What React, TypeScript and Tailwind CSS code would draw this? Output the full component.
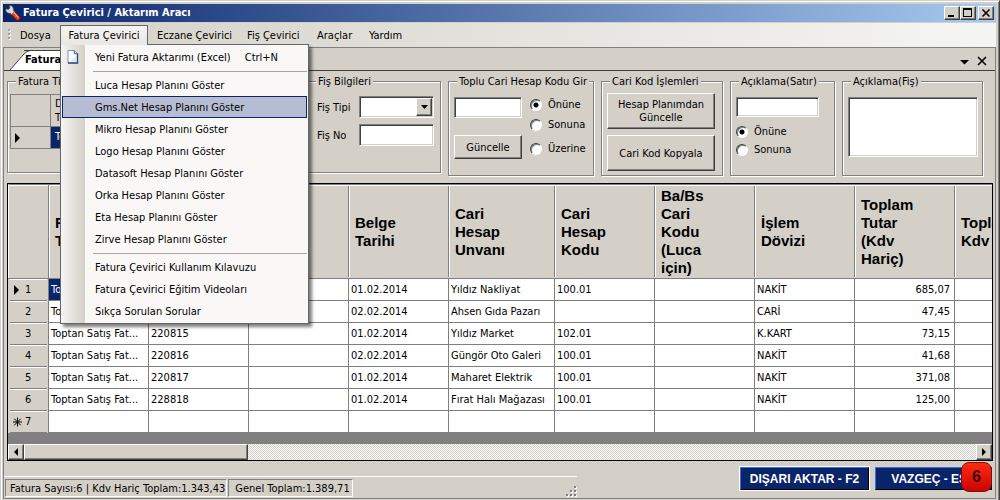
import type { ReactNode } from "react";

const raised =
  "border border-t-white border-l-white border-r-[#404040] border-b-[#404040] bg-[#d4d0c8] shadow-[inset_-1px_-1px_0_#808080]";
const sunken =
  "border border-t-[#808080] border-l-[#808080] border-r-white border-b-white bg-white shadow-[inset_1px_1px_0_#404040,inset_-1px_-1px_0_#d4d0c8] outline-none";

function GroupBox({ title, className, body, children }: { title: string; className: string; body: string; children: ReactNode }) {
  return (
    <fieldset
      className={`min-w-0 border border-[#808080] shadow-[1px_1px_0_#fff,inset_1px_1px_0_#fff] ${className}`}
    >
      <legend className="ml-2 h-3.5 bg-[#d4d0c8] px-0.5 leading-4 whitespace-nowrap">{title}</legend>
      <div className={body}>{children}</div>
    </fieldset>
  );
}

function Radio({ name, label, checked }: { name: string; label: string; checked?: boolean }) {
  return (
    <label className="flex h-4 items-center gap-1.5 leading-4">
      <input
        type="radio"
        name={name}
        defaultChecked={checked}
        className="size-3 shrink-0 appearance-none rounded-full border border-t-[#404040] border-l-[#404040] border-r-white border-b-white bg-white shadow-[inset_1px_1px_0_#808080] checked:bg-[radial-gradient(circle,#000_2px,#fff_3px)]"
      />
      {label}
    </label>
  );
}

function PushButton({ children, className }: { children: ReactNode; className: string }) {
  return (
    <button type="button" className={`${raised} text-center leading-[13px] ${className}`}>
      {children}
    </button>
  );
}

function WrenchIcon() {
  return (
    <svg viewBox="0 0 16 16" className="size-4" aria-hidden="true">
      <path d="M8 8 L12.8 13.2" stroke="#7c1408" strokeWidth="5.2" strokeLinecap="round" />
      <path d="M8 8 L12.7 13" stroke="#e8442c" strokeWidth="3.6" strokeLinecap="round" />
      <path d="M9 7.6 L13.2 12.2" stroke="#ffb09c" strokeWidth="1.1" strokeLinecap="round" />
      <path
        d="M4.4 0.8 L5 3 L3.4 4.6 L1 4 C0.4 6.6 2.6 8.6 5 8.1 L6.6 9.4 L9.4 6.8 L8.2 5.2 C8.8 2.4 6.8 0.2 4.4 0.8 Z"
        fill="#dcdcdc"
        stroke="#6c6c6c"
        strokeWidth="0.7"
      />
    </svg>
  );
}

function PageIcon() {
  return (
    <svg viewBox="0 0 12 14" className="h-3.5 w-3" aria-hidden="true">
      <path d="M1 0.5 H7.5 L10.5 3.5 V13 H1 Z" fill="#fff" stroke="#7d93b5" />
      <path d="M3 12 L9.5 5 V12 Z" fill="#dce8f6" />
      <path d="M10.5 3.5 V13 H1" fill="none" stroke="#2f4d7c" strokeWidth="1.4" />
      <path d="M7.3 0.7 V3.7 H10.3" fill="#cfdcf0" stroke="#2f4d7c" strokeWidth="0.9" />
    </svg>
  );
}

function TitleBar() {
  const box = `${raised} flex h-3.5 w-4 items-center justify-center`;
  return (
    <header className="flex h-[19px] items-center border-b border-[#d4d0c8] bg-[linear-gradient(90deg,#0a246a,#a6caf0)] pr-0.5 pl-0.5">
      <WrenchIcon />
      <h1 className="ml-0.5 flex-1 text-[11px] font-bold text-white">Fatura Çevirici / Aktarım Aracı</h1>
      <button type="button" aria-label="Simge durumuna küçült" className={box}>
        <svg viewBox="0 0 12 10" className="h-2.5 w-3"><path d="M2 7h6v2H2z" /></svg>
      </button>
      <button type="button" aria-label="Ekranı kapla" className={box}>
        <svg viewBox="0 0 12 10" className="h-2.5 w-3"><path d="M1 0h9v9H1zM2 2v6h7V2z" fillRule="evenodd" /></svg>
      </button>
      <button type="button" aria-label="Kapat" className={`${box} ml-0.5`}>
        <svg viewBox="0 0 12 10" className="h-2.5 w-3"><path d="M2.5 1.5l7 7M9.5 1.5l-7 7" stroke="#000" strokeWidth="1.6" /></svg>
      </button>
    </header>
  );
}

function MenuEntry({ children, shortcut, icon, active }: { children: ReactNode; shortcut?: string; icon?: ReactNode; active?: boolean }) {
  return (
    <li
      role="none"
      className={`flex h-[22px] items-center border ${active ? "border-[#0a246a] bg-[#b6bdd2]" : "border-transparent"}`}
    >
      <span className="flex w-8 shrink-0 pl-1">{icon}</span>
      <button type="button" role="menuitem" className="flex gap-3.5 pt-0.5 leading-4 whitespace-nowrap">
        <span>{children}</span>
        {shortcut && <span>{shortcut}</span>}
      </button>
    </li>
  );
}

function Separator() {
  return (
    <li role="separator" className="flex h-1.5 items-center pl-[31px]">
      <span className="h-px flex-1 bg-[#a6a6a6]" />
    </li>
  );
}

const plans = ["Luca", "Gms.Net", "Mikro", "Logo", "Datasoft", "Orka", "Eta", "Zirve"];

function MenuBar() {
  const item = "h-5 pl-[9px] text-left leading-[22px] whitespace-nowrap";
  return (
    <nav className="flex h-6 bg-[linear-gradient(90deg,#d4d0c8,#f5f5f3)] pt-0.5">
      <svg viewBox="0 0 3 12" className="mt-1 ml-[5px] h-3 w-[3px]" aria-hidden="true">
        <path d="M0 0h2v2H0zM0 4h2v2H0zM0 8h2v2H0z" fill="#a9a59c" />
        <path d="M2 1h1v2H1V2h1zM2 5h1v2H1V6h1zM2 9h1v2H1v-1h1z" fill="#fff" />
      </svg>
      <button type="button" className={`${item} w-[49px]`}>Dosya</button>
      <div className="relative z-30">
        <button
          type="button"
          aria-expanded="true"
          className="relative z-20 block h-5 w-[88px] border border-b-0 border-[#666] bg-[linear-gradient(#f5f4f2,#e9e7e3)] text-center leading-5"
        >
          Fatura Çevirici
        </button>
        <ul
          role="menu"
          className="absolute top-[19px] left-0 z-10 w-[249px] border border-[#666] bg-[linear-gradient(90deg,#f6f5f3,#d4d0c8_24px,#f9f8f7_24px)] p-px shadow-[3px_3px_3px_#00000080]"
        >
          <MenuEntry icon={<PageIcon />} shortcut="Ctrl+N">Yeni Fatura Aktarımı (Excel)</MenuEntry>
          <Separator />
          {plans.map((p) => (
            <MenuEntry key={p} active={p === "Gms.Net"}>{p} Hesap Planını Göster</MenuEntry>
          ))}
          <Separator />
          <MenuEntry>Fatura Çevirici Kullanım Kılavuzu</MenuEntry>
          <MenuEntry>Fatura Çevirici Eğitim Videoları</MenuEntry>
          <MenuEntry>Sıkça Sorulan Sorular</MenuEntry>
        </ul>
      </div>
      <button type="button" className={`${item} w-[90px]`}>Eczane Çevirici</button>
      <button type="button" className={`${item} w-[70px]`}>Fiş Çevirici</button>
      <button type="button" className={`${item} w-[52px]`}>Araçlar</button>
      <button type="button" className={`${item} w-[52px]`}>Yardım</button>
    </nav>
  );
}

function TabStrip() {
  return (
    <div className="flex h-[23px] items-end border-b border-[#404040] pl-1.5">
      <svg viewBox="0 0 20 20" className="h-5 w-5" aria-hidden="true">
        <path d="M0 20 L14 4 Q17 1 20 0.5 V20 Z" fill="#fff" />
        <path d="M0 20 L14 4 Q17 1 20 0.5" fill="none" stroke="#404040" />
      </svg>
      <button type="button" className="-ml-1.5 h-5 w-28 border-t border-[#404040] bg-[linear-gradient(90deg,transparent_6px,#fff_6px)] pl-px text-left font-bold">
        Fatura Çevirici
      </button>
      <div className="mb-1 ml-auto flex items-center gap-2 pr-2">
        <button type="button" aria-label="Sekmeler">
          <svg viewBox="0 0 9 10" className="h-2.5 w-[9px]"><path d="M0 4h9L4.5 8.5z" /></svg>
        </button>
        <button type="button" aria-label="Sekmeyi kapat">
          <svg viewBox="0 0 10 10" className="size-2.5"><path d="M1 1l8 8M9 1l-8 8" stroke="#000" strokeWidth="1.6" /></svg>
        </button>
      </div>
    </div>
  );
}

function Groups() {
  return (
    <div className="grid grid-cols-[293fr_134fr_146fr_122fr_105fr_141fr] items-start gap-[7px] pt-[3px] pr-3 pl-[3px]">
      <GroupBox title="Fatura Tipi" className="h-[99px]" body="pt-1.5 pl-0.5">
        <table className="border-collapse bg-[#d4d0c8]">
          <tbody>
            <tr className="h-8">
              <th className="w-10 border border-[#808080]" aria-label="Satır" />
              <th className="w-60 border border-[#808080] pl-1 text-left leading-[14px] font-normal">Dosya<br />Tipi</th>
            </tr>
            <tr className="h-[22px]">
              <td className="border border-[#808080] pl-1">
                <svg viewBox="0 0 6 10" className="h-2.5 w-1.5" aria-hidden="true"><path d="M0 0l5 5-5 5z" /></svg>
              </td>
              <td className="border border-[#808080] bg-[#0a246a] pl-1 text-white">Toptan Satış</td>
            </tr>
          </tbody>
        </table>
      </GroupBox>

      <GroupBox title="Fiş Bilgileri" className="h-[99px]" body="pt-2 pr-1.5 pl-[9px]">
        <div className="grid grid-cols-[42px_1fr] items-center gap-y-1.5">
          <label htmlFor="fis-tipi" className="pt-0.5 whitespace-nowrap">Fiş Tipi</label>
          <div className="relative">
            <select id="fis-tipi" className={`${sunken} block h-[22px] w-full appearance-none`}><option value="" /></select>
            <span className={`${raised} pointer-events-none absolute top-0.5 right-0.5 flex h-[18px] w-4 items-center justify-center`}>
              <svg viewBox="0 0 7 4" className="h-1 w-[7px]"><path d="M0 0h7L3.5 4z" /></svg>
            </span>
          </div>
          <label htmlFor="fis-no" className="pt-0.5">Fiş No</label>
          <input id="fis-no" type="text" className={`${sunken} h-[22px] w-full min-w-0`} />
        </div>
      </GroupBox>

      <GroupBox title="Toplu Cari Hesap Kodu Gir" className="h-[102px]" body="pt-2 pl-[5px]">
        <div className="flex gap-2">
          <div className="flex w-[68px] flex-col gap-[17px] pt-px">
            <input type="text" aria-label="Cari hesap kodu" className={`${sunken} h-[21px] w-full`} />
            <PushButton className="h-6 w-full">Güncelle</PushButton>
          </div>
          <div className="flex flex-col gap-1 pt-px">
            <Radio name="cari" label="Önüne" checked />
            <Radio name="cari" label="Sonuna" />
            <div className="pt-1"><Radio name="cari" label="Üzerine" /></div>
          </div>
        </div>
      </GroupBox>

      <GroupBox title="Cari Kod İşlemleri" className="h-[102px]" body="pt-[5px] pr-[7px] pl-[5px]">
        <div className="flex flex-col gap-1.5">
          <PushButton className="h-9 w-full">Hesap Planımdan<br />Güncelle</PushButton>
          <PushButton className="h-9 w-full">Cari Kod Kopyala</PushButton>
        </div>
      </GroupBox>

      <GroupBox title="Açıklama(Satır)" className="h-[102px]" body="pt-[9px] pr-[15px] pl-[5px]">
        <input type="text" aria-label="Satır açıklaması" className={`${sunken} mb-[7px] block h-5 w-full`} />
        <div className="flex flex-col gap-0.5">
          <Radio name="satir" label="Önüne" checked />
          <Radio name="satir" label="Sonuna" />
        </div>
      </GroupBox>

      <GroupBox title="Açıklama(Fiş)" className="h-[102px]" body="pt-[9px] pr-1 pl-[5px]">
        <textarea aria-label="Fiş açıklaması" className={`${sunken} block h-[60px] w-full resize-none`} />
      </GroupBox>
    </div>
  );
}

const headers = [
  ["Fatura", "Tipi"],
  [],
  [],
  ["Belge", "Tarihi"],
  ["Cari", "Hesap", "Unvanı"],
  ["Cari", "Hesap", "Kodu"],
  ["Ba/Bs", "Cari", "Kodu", "(Luca", "için)"],
  ["İşlem", "Dövizi"],
  ["Toplam", "Tutar", "(Kdv", "Hariç)"],
  ["Toplam", "Kdv"],
];

const kind = "Toptan Satış Fat...";
const rows = [
  [kind, "", "", "01.02.2014", "Yıldız Nakliyat", "100.01", "", "NAKİT", "685,07", ""],
  [kind, "", "", "02.02.2014", "Ahsen Gıda Pazarı", "", "", "CARİ", "47,45", ""],
  [kind, "220815", "", "01.02.2014", "Yıldız Market", "102.01", "", "K.KART", "73,15", ""],
  [kind, "220816", "", "02.02.2014", "Güngör Oto Galeri", "100.01", "", "NAKİT", "41,68", ""],
  [kind, "220817", "", "01.02.2014", "Maharet Elektrik", "100.01", "", "NAKİT", "371,08", ""],
  [kind, "228818", "", "01.02.2014", "Fırat Halı Mağazası", "100.01", "", "NAKİT", "125,00", ""],
  ["", "", "", "", "", "", "", "", "", ""],
];

function RowMarker({ index }: { index: number }) {
  if (index === 0) {
    return <svg viewBox="0 0 9 10" className="h-2.5 w-[9px]" aria-hidden="true"><path d="M1 0l5 5-5 5z" /></svg>;
  }
  if (index === rows.length - 1) {
    return (
      <svg viewBox="0 0 9 10" className="h-2.5 w-[9px]" aria-hidden="true">
        <path d="M4.5 0.5v9M0 5h9M1.2 1.7l6.6 6.6M7.8 1.7l-6.6 6.6" stroke="#000" strokeWidth="1" />
      </svg>
    );
  }
  return <span className="w-[9px]" />;
}

function InvoiceGrid() {
  return (
    <div className="mt-[7px] mr-0.5 ml-[3px] flex flex-1 flex-col overflow-hidden border border-black bg-[#808080]">
      <div className="overflow-hidden">
        <table className="w-[1047px] table-fixed border-separate border-spacing-0">
          <colgroup>
            <col className="w-[41px]" />
            {headers.map((_, i) => (
              <col key={i} className={i === 4 ? "w-[106px]" : "w-[100px]"} />
            ))}
          </colgroup>
          <thead>
            <tr>
              <th className="border-b border-[#808080] bg-[#d4d0c8] p-0" aria-label="Sıra">
                <div className="h-[94px] border border-t-[#808080] border-r-[#808080] border-b-0 border-l-white shadow-[inset_0_1px_0_#fff]" />
              </th>
              {headers.map((lines, i) => (
                <th key={i} className="border-b border-t border-b-[#808080] border-t-[#808080] bg-[#d4d0c8] p-0 py-px text-left align-middle shadow-[inset_0_1px_0_#fff]">
                  <div className="flex h-[91px] flex-col justify-center border-r border-l border-r-[#808080] border-l-white pl-[5px] font-['Liberation_Sans',Arial,sans-serif] text-[15px] leading-[18px] font-bold">
                    {lines.map((l) => (
                      <span key={l}>{l}</span>
                    ))}
                  </div>
                </th>
              ))}
            </tr>
          </thead>
          <tbody>
            {rows.map((cells, r) => (
              <tr key={r}>
                <th className="border-r border-[#808080] bg-[#d4d0c8] p-0 font-normal">
                  <div className="mr-px ml-0.5 flex h-[22px] items-center gap-[3px] border-t border-b border-t-white border-b-[#808080] pl-[3px] leading-5">
                    <RowMarker index={r} />
                    {r + 1}
                  </div>
                </th>
                {cells.map((c, i) => (
                  <td
                    key={i}
                    className={`h-[22px] overflow-hidden border-r border-b border-[#808080] pt-px pb-0 leading-5 whitespace-nowrap ${
                      i === 8 ? "pr-1 text-right" : "pl-0.5"
                    } ${r === 0 && i === 0 ? "bg-[#0a246a] text-white" : "bg-white"}`}
                  >
                    {c}
                  </td>
                ))}
              </tr>
            ))}
          </tbody>
        </table>
      </div>
      <div className="mt-auto flex h-4 bg-[repeating-conic-gradient(#fff_0_25%,#d4d0c8_0_50%)] bg-size-[2px_2px]">
        <button type="button" aria-label="Sola kaydır" className={`${raised} flex w-4 items-center justify-center`}>
          <svg viewBox="0 0 4 8" className="h-2 w-1"><path d="M4 0v8L0 4z" /></svg>
        </button>
        <div className={`${raised} w-56`} />
        <button type="button" aria-label="Sağa kaydır" className={`${raised} ml-auto flex w-4 items-center justify-center`}>
          <svg viewBox="0 0 4 8" className="h-2 w-1"><path d="M0 0v8l4-4z" /></svg>
        </button>
      </div>
    </div>
  );
}

function Footer() {
  const panel = "h-[18px] border border-t-[#808080] border-l-[#808080] border-r-white border-b-white leading-[18px] whitespace-nowrap";
  const action = "h-[23px] border border-t-[#3a6ee0] border-l-[#3a6ee0] border-r-black border-b-black bg-[#0a246a] font-['Liberation_Sans',Arial,sans-serif] text-[12px] font-bold text-white";
  return (
    <footer className="flex h-[37px] pr-[3px]">
      <div className="flex h-[22px] w-[58%] items-start gap-px self-end border-t border-white pt-0.5 pl-px">
        <span className={`${panel} pr-px pl-1`}>Fatura Sayısı:6 | Kdv Hariç Toplam:1.343,43</span>
        <span className={`${panel} pr-0.5 pl-1.5`}>Genel Toplam:1.389,71</span>
        <svg viewBox="0 0 12 12" className="mt-1.5 ml-auto size-3" aria-hidden="true">
          <path d="M9 1h2v2H9zM5 5h2v2H5zM9 5h2v2H9zM1 9h2v2H1zM5 9h2v2H5zM9 9h2v2H9z" fill="#808080" />
          <path d="M11 2h1v2h-2V3h1zM7 6h1v2H6V7h1zM11 6h1v2h-2V7h1zM3 10h1v2H2v-1h1zM7 10h1v2H6v-1h1zM11 10h1v2h-2v-1h1z" fill="#fff" />
        </svg>
      </div>
      <div className="ml-auto flex items-start gap-1.5 pt-1.5">
        <button type="button" className={`${action} w-[129px] outline outline-white`}>DIŞARI AKTAR - F2</button>
        <div className="relative">
          <button type="button" className={`${action} block w-[117px]`}>VAZGEÇ - ESC</button>
          <span className="absolute -top-[5px] right-0 flex h-[30px] w-[31px] items-center justify-center rounded-lg border border-[#7a1208] bg-[linear-gradient(#ff2a10,#cc0400)] font-['Liberation_Sans',Arial,sans-serif] text-[16px] font-bold text-[#3a0806]">
            6
          </span>
        </div>
      </div>
    </footer>
  );
}

export default function App() {
  return (
    <div className="flex min-h-screen flex-col border-t border-r border-l border-t-[#d4d0c8] border-r-[#404040] border-l-[#d4d0c8] bg-[#d4d0c8] pt-[3px] pr-[3px] pb-px pl-0.5 font-['DejaVu_Sans_Condensed','DejaVu_Sans',Tahoma,sans-serif] text-[11px] text-black shadow-[inset_1px_1px_0_#fff,inset_-1px_0_0_#808080]">
      <TitleBar />
      <MenuBar />
      <main className="flex flex-1 flex-col border border-[#808080]">
        <TabStrip />
        <Groups />
        <InvoiceGrid />
        <Footer />
      </main>
    </div>
  );
}
